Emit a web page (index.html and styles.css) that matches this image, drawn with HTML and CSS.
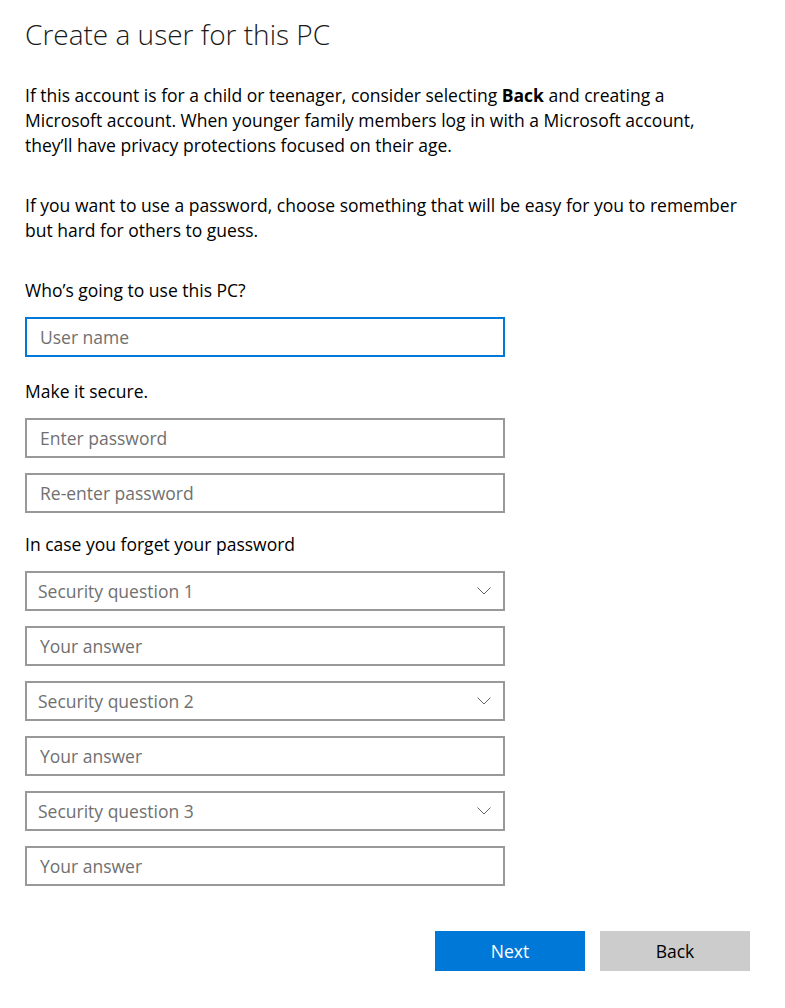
FILE: index.html
```html
<!DOCTYPE html>
<html lang="en">
<head>
<meta charset="utf-8">
<title>Create a user for this PC</title>
<link rel="stylesheet" href="styles.css">
</head>
<body>
<main class="page">
  <h1 class="title">Create a user for this PC</h1>
  <p class="para p1">If this account is for a child or teenager, consider selecting <b>Back</b> and creating a<br>Microsoft account. When younger family members log in with a Microsoft account,<br>they’ll have privacy protections focused on their age.</p>
  <p class="para p2">If you want to use a password, choose something that will be easy for you to remember<br>but hard for others to guess.</p>

  <div class="label l1">Who’s going to use this PC?</div>
  <div class="field focused"><span class="ph">User name</span></div>

  <div class="label l2">Make it secure.</div>
  <div class="group">
    <div class="field"><span class="ph">Enter password</span></div>
    <div class="field"><span class="ph">Re-enter password</span></div>
  </div>

  <div class="label l3">In case you forget your password</div>
  <div class="group">
    <div class="field select"><span class="ph sel">Security question 1</span><svg class="chev" width="14" height="8" viewBox="0 0 14 8"><path d="M0.5 0.5 L7 7 L13.5 0.5" fill="none" stroke="#666" stroke-width="1"/></svg></div>
    <div class="field"><span class="ph">Your answer</span></div>
    <div class="field select"><span class="ph sel">Security question 2</span><svg class="chev" width="14" height="8" viewBox="0 0 14 8"><path d="M0.5 0.5 L7 7 L13.5 0.5" fill="none" stroke="#666" stroke-width="1"/></svg></div>
    <div class="field"><span class="ph">Your answer</span></div>
    <div class="field select"><span class="ph sel">Security question 3</span><svg class="chev" width="14" height="8" viewBox="0 0 14 8"><path d="M0.5 0.5 L7 7 L13.5 0.5" fill="none" stroke="#666" stroke-width="1"/></svg></div>
    <div class="field"><span class="ph">Your answer</span></div>
  </div>

  <div class="buttons">
    <button class="btn primary">Next</button>
    <button class="btn secondary">Back</button>
  </div>
</main>
</body>
</html>
```

FILE: styles.css
```css
html, body {
  margin: 0;
  padding: 0;
  background: #ffffff;
}
body {
  font-family: "Open Sans", "Noto Sans", "Liberation Sans", sans-serif;
  color: #000000;
}
.page {
  width: 725px;
  padding: 16px 0 0 25px;
  display: flex;
  flex-direction: column;
}
.title {
  margin: 0;
  font-size: 28px;
  font-weight: 300;
  line-height: 36px;
  color: #1a1a1a;
}
.para {
  margin: 0;
  font-size: 17.5px;
  line-height: 25px;
  white-space: nowrap;
}
.para b { font-weight: 700; }
.p1 { margin-top: 31px; }
.p2 { margin-top: 35px; }
.label {
  font-size: 17.5px;
  line-height: 25px;
}
.l1 { margin-top: 35px; margin-bottom: 14px; }
.l2 { margin-top: 22px; margin-bottom: 14px; }
.l3 { margin-top: 19px; margin-bottom: 14px; }
.group {
  display: flex;
  flex-direction: column;
  gap: 15px;
}
.field {
  box-sizing: border-box;
  width: 480px;
  height: 40px;
  border: 2px solid #999999;
  background: #ffffff;
  display: flex;
  align-items: center;
  padding: 0 12px 0 13px;
}
.field.focused { border-color: #0078d7; }
.ph {
  font-size: 17.5px;
  color: #707070;
}
.select { justify-content: space-between; padding-left: 11px; }
.chev { display: block; }
.buttons {
  margin-top: 45px;
  display: flex;
  justify-content: flex-end;
  gap: 15px;
}
.btn {
  width: 150px;
  height: 40px;
  border: none;
  font-family: "Open Sans", "Noto Sans", "Liberation Sans", sans-serif;
  font-size: 17.5px;
  padding: 0;
}
.primary { background: #0078d7; color: #ffffff; }
.secondary { background: #cccccc; color: #000000; }
```
